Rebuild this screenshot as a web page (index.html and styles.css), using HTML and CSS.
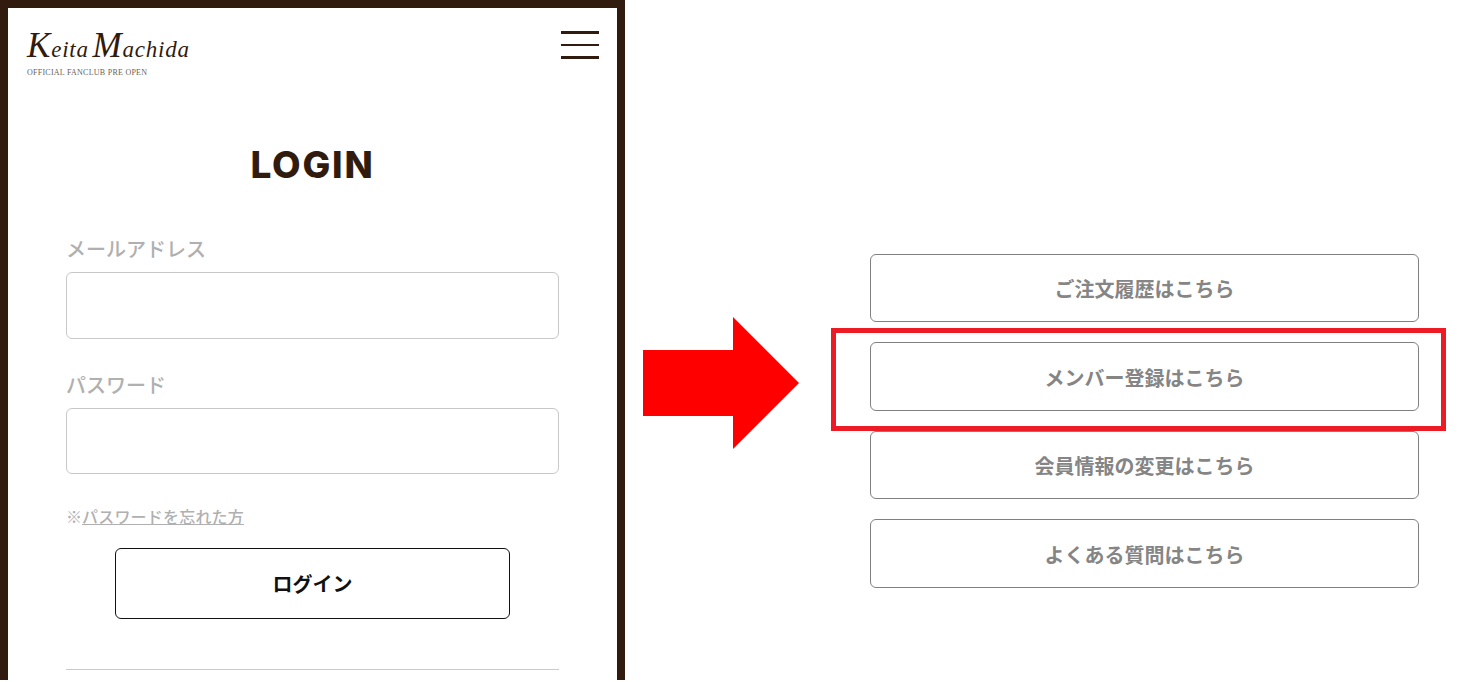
FILE: index.html
```html
<!DOCTYPE html>
<html lang="ja">
<head>
    <meta charset="UTF-8">
    <meta name="viewport" content="width=device-width, initial-scale=1.0">
    <title>Keita Machida</title>
    <link rel="stylesheet" href="styles.css">
</head>
<body>
    <div class="page">
        <!-- Login screen -->
        <div class="phone">
            <div class="phone-header">
                <div class="logo">
                    <div class="logo-name"><span class="logo-cap">K</span>eita <span class="logo-cap logo-cap-m">M</span>achida</div>
                    <div class="logo-sub">OFFICIAL FANCLUB PRE OPEN</div>
                </div>
                <div class="hamburger">
                    <span class="bar"></span>
                    <span class="bar bar-thin"></span>
                    <span class="bar"></span>
                </div>
            </div>

            <h1 class="login-title">LOGIN</h1>

            <div class="login-form">
                <label class="field-label">メールアドレス</label>
                <div class="field-input"></div>
                <label class="field-label field-label-second">パスワード</label>
                <div class="field-input field-input-second"></div>
                <p class="forgot">※<a class="forgot-link" href="#">パスワードを忘れた方</a></p>
                <div class="login-button">ログイン</div>
                <div class="divider"></div>
            </div>
        </div>

        <!-- Arrow -->
        <svg class="arrow" width="156" height="132" viewBox="0 0 156 132">
            <path d="M0 33H90V0L156 66L90 132V99H0Z" fill="#ff0000"/>
        </svg>

        <!-- Menu buttons -->
        <div class="menu">
            <div class="menu-button">ご注文履歴はこちら</div>
            <div class="menu-button menu-button-tall menu-button-marked">
                メンバー登録はこちら
                <div class="highlight"></div>
            </div>
            <div class="menu-button">会員情報の変更はこちら</div>
            <div class="menu-button menu-button-tall">よくある質問はこちら</div>
        </div>
    </div>
</body>
</html>
```

FILE: styles.css
```css
body {
    margin: 0;
    background: #fff;
    font-family: "Noto Sans CJK JP", "Noto Sans", sans-serif;
}

.page {
    display: flex;
    align-items: flex-start;
    height: 682px;
    overflow: hidden;
}

/* Login screen */
.phone {
    box-sizing: border-box;
    flex: none;
    width: 625px;
    height: 680px;
    border: 8px solid #301b0e;
    border-bottom: 0;
    overflow: hidden;
}

.phone-header {
    display: flex;
    justify-content: space-between;
    align-items: flex-start;
    padding: 23px 18px 0 19px;
}

.logo {
    color: #301b0e;
}

.logo-name {
    font-family: "Liberation Serif", serif;
    font-style: italic;
    font-size: 23px;
    line-height: 30px;
    letter-spacing: 0.8px;
    white-space: nowrap;
}

.logo-cap {
    font-size: 35px;
    line-height: 30px;
}

.logo-cap-m {
    margin-left: -3px;
}

.logo-sub {
    margin-top: 2px;
    font-family: "Liberation Serif", serif;
    font-size: 8px;
    line-height: 11px;
    letter-spacing: 0.25px;
    color: #6b5f57;
    white-space: nowrap;
}

.hamburger {
    display: flex;
    flex-direction: column;
    gap: 10px;
    width: 38px;
}

.bar {
    display: block;
    height: 3px;
    background: #301b0e;
}

.bar-thin {
    height: 2px;
}

.login-title {
    margin: 65px 0 0;
    font-family: "Inter", sans-serif;
    font-size: 37px;
    font-weight: 800;
    line-height: 44px;
    letter-spacing: 1.8px;
    text-align: center;
    color: #301b0e;
}

.login-form {
    display: flex;
    flex-direction: column;
    margin: 47px 58px 0;
    color: #b0b0b0;
}

.field-label {
    font-size: 20px;
    font-weight: 500;
    line-height: 30px;
}

.field-label-second {
    margin-top: 31px;
}

.field-input {
    box-sizing: border-box;
    height: 67px;
    margin-top: 8px;
    border: 1px solid #c8c8c8;
    border-radius: 6px;
}

.field-input-second {
    height: 66px;
}

.forgot {
    margin: 30px 0 0;
    font-size: 16px;
    font-weight: 500;
    line-height: 24px;
}

.forgot-link {
    color: #b0b0b0;
    text-decoration: underline;
    letter-spacing: 0.2px;
}

.login-button {
    box-sizing: border-box;
    align-self: center;
    width: 395px;
    height: 71px;
    margin-top: 20px;
    border: 1px solid #111;
    border-radius: 6px;
    font-size: 20px;
    font-weight: 700;
    line-height: 69px;
    text-align: center;
    color: #111;
}

.divider {
    height: 1px;
    margin-top: 50px;
    background: #cbcbcb;
}

/* Arrow */
.arrow {
    flex: none;
    margin: 317px 0 0 18px;
}

/* Menu buttons */
.menu {
    display: flex;
    flex-direction: column;
    gap: 20px;
    width: 549px;
    margin: 254px 0 0 71px;
}

.menu-button {
    box-sizing: border-box;
    height: 68px;
    border: 1px solid #808080;
    border-radius: 6px;
    font-size: 20px;
    font-weight: 700;
    line-height: 68px;
    text-align: center;
    color: #858585;
}

.menu-button-tall {
    height: 69px;
    line-height: 70px;
}

.menu-button-marked {
    position: relative;
}

.highlight {
    position: absolute;
    top: -15px;
    right: -28px;
    bottom: -21px;
    left: -40px;
    border: 5px solid #ed1c24;
}
```
